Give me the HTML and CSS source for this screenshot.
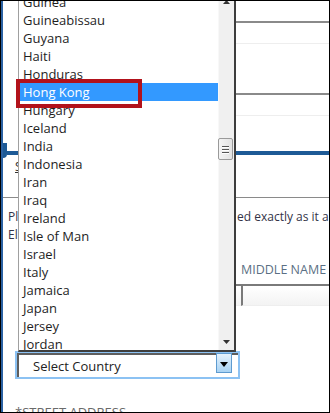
FILE: index.html
```html
<!DOCTYPE html>
<html>
<head>
<meta charset="utf-8">
<title>Country select</title>
<link rel="stylesheet" href="styles.css">
</head>
<body>
<div class="frame">
  <div class="page">
    <div class="field field-a"></div>
    <div class="field field-b"></div>
    <div class="tabs">
      <div class="tab-bar"><span class="tab-cap"></span><span class="tab-line"></span></div>
      <div class="tab-body"><span class="tab-label">S</span></div>
    </div>
    <div class="intro">
      <div class="intro-line"><span class="intro-lead">Please enter your name. It must be typ</span><span>ed exactly as it appears on your passport.</span></div>
      <div class="intro-line">Eligible travellers only.</div>
    </div>
    <div class="names">
      <div class="name-col first"><div class="label">FIRST NAME</div><div class="input"></div></div>
      <div class="name-col"><div class="label">MIDDLE NAME</div><div class="input"></div></div>
    </div>
    <div class="select">
      <span class="select-text">Select Country</span>
      <span class="select-btn"><svg width="8" height="5" viewBox="0 0 8 5"><polygon points="0,0 8,0 4,5" fill="#000"/></svg></span>
    </div>
    <div class="label street">*STREET ADDRESS</div>
  </div>
  <div class="dropdown">
    <ul class="options">
      <li>Guinea</li>
      <li>Guineabissau</li>
      <li>Guyana</li>
      <li>Haiti</li>
      <li>Honduras</li>
      <li class="selected">Hong Kong</li>
      <li>Hungary</li>
      <li>Iceland</li>
      <li>India</li>
      <li>Indonesia</li>
      <li>Iran</li>
      <li>Iraq</li>
      <li>Ireland</li>
      <li>Isle of Man</li>
      <li>Israel</li>
      <li>Italy</li>
      <li>Jamaica</li>
      <li>Japan</li>
      <li>Jersey</li>
      <li>Jordan</li>
    </ul>
    <div class="scrollbar">
      <div class="sb-btn"><svg width="7" height="4" viewBox="0 0 7 4"><polygon points="0,4 3.5,0 7,4" fill="#333"/></svg></div>
      <div class="sb-track"><div class="sb-thumb"><i></i><i></i><i></i></div></div>
      <div class="sb-btn"><svg width="7" height="4" viewBox="0 0 7 4"><polygon points="0,0 7,0 3.5,4" fill="#333"/></svg></div>
    </div>
  </div>
  <div class="callout"></div>
</div>
</body>
</html>
```
FILE: styles.css
```css
* { box-sizing: border-box; margin: 0; padding: 0; }
html, body { width: 330px; height: 413px; overflow: hidden; background: #fff; }
body { font-family: "Open Sans", "Liberation Sans", sans-serif; }

.frame {
  position: relative;
  width: 330px;
  height: 413px;
  border: 1px solid #000;
  overflow: hidden;
  background: #fff;
}
.page {
  height: 100%;
  border-left: 2px solid #2b62a3;
  display: flex;
  flex-direction: column;
}

.field {
  flex: none;
  margin-left: 190px;
  border-top: 2px solid #8a8a8a;
  border-bottom: 1px solid #eeeeee;
}
.field-a { margin-top: 20px; height: 23px; }
.field-b { margin-top: 49px; height: 23px; }

.tabs {
  flex: none;
  margin-top: 27px;
  height: 55px;
  border-bottom: 1px solid #8a8a8a;
}
.tab-bar { display: flex; align-items: flex-start; height: 16px; }
.tab-cap { width: 4px; height: 15px; background: #1d5a96; border-radius: 0 0 4px 0; }
.tab-line { flex: 1; height: 4px; margin-top: 8px; background: #1d5a96; }
.tab-body { padding-left: 12px; font-size: 12px; line-height: 16px; color: #333; }
.tab-label { text-decoration: underline; }

.intro {
  flex: none;
  margin-top: 10px;
  padding-left: 5px;
  font-size: 12px;
  line-height: 18px;
  color: #333347;
}
.intro-line { display: flex; white-space: nowrap; }
.intro-lead { width: 229px; overflow: hidden; flex: none; }

.names {
  flex: none;
  display: grid;
  grid-template-columns: 238px 1fr;
  margin-top: 17px;
}
.first { padding-left: 20px; }
.label {
  font-size: 12.5px;
  line-height: 18px;
  color: #5b6f84;
  white-space: nowrap;
}
.input {
  margin-top: 5px;
  height: 22px;
  border-top: 2px solid #7a7a7a;
  border-left: 2px solid #7a7a7a;
  border-bottom: 1px solid #eeeeee;
  background: linear-gradient(#ffffff, #f3f3f3);
}

.select {
  flex: none;
  margin-top: 45px;
  margin-left: 12px;
  width: 225px;
  height: 28px;
  border: 2px solid #8cc2f3;
  box-shadow: inset 2px 2px 0 #5e5e5e;
  background: #fff;
  display: flex;
  align-items: flex-start;
  justify-content: space-between;
}
.select-text {
  padding-left: 16px;
  font-size: 13px;
  line-height: 27px;
  color: #222;
}
.select-btn {
  width: 16px;
  height: 20px;
  margin-right: 6px;
  border: 1px solid #5e9bd0;
  background: linear-gradient(#e6f2fc, #a8d3f4);
  display: flex;
  align-items: center;
  justify-content: center;
}
.select-btn svg { display: block; margin-top: 2px; }

.street { margin-top: 24px; margin-left: 12px; font-size: 13px; color: #6a6a6a; }

.dropdown {
  position: absolute;
  left: 17px;
  top: -8px;
  width: 218px;
  height: 359px;
  background: #fff;
  border-left: 1px solid #a0a0a0;
  border-right: 2px solid #3d3d3d;
  border-bottom: 2px solid #3d3d3d;
  display: flex;
}
.options {
  flex: 1;
  list-style: none;
  padding-left: 1px;
  overflow: hidden;
}
.options li {
  height: 18px;
  line-height: 18px;
  padding-left: 3px;
  font-size: 13px;
  color: #1e1e1e;
  white-space: nowrap;
}
.options li.selected { background: #3399ff; color: #fff; }

.scrollbar {
  flex: none;
  width: 16px;
  background: #f0f0f0;
  border-left: 1px solid #f8f8f8;
  display: flex;
  flex-direction: column;
}
.sb-btn {
  flex: none;
  height: 17px;
  display: flex;
  align-items: center;
  justify-content: center;
}
.sb-btn svg { display: block; }
.sb-track { flex: 1; padding-top: 128px; }
.sb-thumb {
  width: 15px;
  height: 22px;
  margin-left: -1px;
  border: 1px solid #9a9a9a;
  border-radius: 2px;
  background: linear-gradient(90deg, #f4f4f4, #e2e2e2);
  display: flex;
  flex-direction: column;
  align-items: center;
  justify-content: center;
  gap: 2px;
}
.sb-thumb i {
  display: block;
  width: 7px;
  height: 1px;
  background: #555;
  box-shadow: 0 1px 0 #fff;
}

.callout {
  position: absolute;
  left: 15px;
  top: 78px;
  width: 126px;
  height: 29px;
  border: 4px solid #b2121b;
}
```
